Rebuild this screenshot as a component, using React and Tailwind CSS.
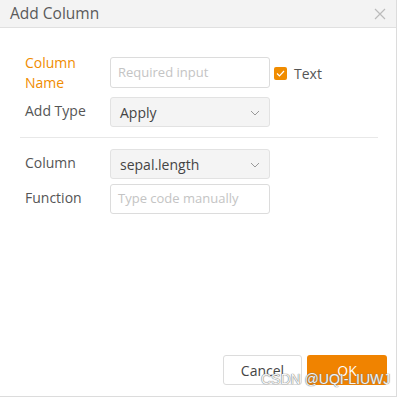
import React from "react";

function Chevron() {
  return (
    <svg width="10" height="6" viewBox="0 0 10 6" className="absolute right-[9px] top-[12px]">
      <path d="M1 1 L5 5 L9 1" fill="none" stroke="#999" strokeWidth="1" />
    </svg>
  );
}

export default function App() {
  return (
    <div className="relative w-[399px] h-[398px] bg-white overflow-hidden" style={{ fontFamily: '"Open Sans", "Noto Sans", sans-serif' }}>
      <div className="w-[397px] h-[397px] border-r border-b border-[#dcdcdc] flex flex-col">
        <div className="h-[28px] bg-[#f3f3f3] border-b border-[#e0e0e0] flex items-center justify-between pl-[10px] pr-[10px] shrink-0">
          <span className="text-[15.5px] text-[#5a5a5a] leading-none">Add Column</span>
          <svg width="12" height="12" viewBox="0 0 12 12">
            <path d="M1 1 L11 11 M11 1 L1 11" stroke="#bbb" strokeWidth="1.2" />
          </svg>
        </div>
        <div className="flex-1 flex flex-col pt-[29px] px-[20px]">
          <div className="flex items-start h-[31px]">
            <div className="w-[90px] pl-[5px] text-[14px] leading-[20px] text-[#f08c00] -mt-[4px]">
              Column<br />Name
            </div>
            <div className="w-[160px] h-[31px] border border-[#dcdcdc] rounded-[3px] flex items-center px-[7px] text-[13px] text-[#c4c4c4]">
              Required input
            </div>
            <div className="flex items-center ml-[4px] mt-[6px]">
              <div className="w-[13px] h-[13px] bg-[#f08c00] rounded-[2px] flex items-center justify-center">
                <svg width="9" height="7" viewBox="0 0 9 7">
                  <path d="M1 3.5 L3.5 6 L8 1" fill="none" stroke="#fff" strokeWidth="1.2" />
                </svg>
              </div>
              <span className="ml-[7px] text-[14px] text-[#555]">Text</span>
            </div>
          </div>
          <div className="flex items-center mt-[9px]">
            <div className="w-[90px] pl-[5px] text-[14px] text-[#555] -mt-[4px]">Add Type</div>
            <div className="relative w-[160px] h-[30px] bg-[#f4f4f4] border border-[#e2e2e2] rounded-[3px] flex items-center px-[9px] text-[14px] text-[#444]">
              Apply
              <Chevron />
            </div>
          </div>
          <div className="h-px bg-[#e8e8e8] mt-[10px] mr-[-2px]"></div>
          <div className="flex items-center mt-[11px]">
            <div className="w-[90px] pl-[5px] text-[14px] text-[#555] -mt-[4px]">Column</div>
            <div className="relative w-[160px] h-[30px] bg-[#f4f4f4] border border-[#e2e2e2] rounded-[3px] flex items-center px-[9px] text-[14px] text-[#444]">
              sepal.length
              <Chevron />
            </div>
          </div>
          <div className="flex items-center mt-[5px]">
            <div className="w-[90px] pl-[5px] text-[14px] text-[#555] -mt-[4px]">Function</div>
            <div className="w-[160px] h-[30px] border border-[#dcdcdc] rounded-[3px] flex items-center px-[7px] text-[13px] text-[#c4c4c4]">
              Type code manually
            </div>
          </div>
          <div className="flex-1"></div>
          <div className="flex justify-end gap-[5px] pb-[11px] mr-[-11px]">
            <div className="w-[79px] h-[30px] border border-[#dcdcdc] rounded-[3px] flex items-center justify-center text-[14px] text-[#444]">
              Cancel
            </div>
            <div className="w-[80px] h-[30px] bg-[#f08300] rounded-[3px] flex items-center justify-center text-[14px] text-white">
              OK
            </div>
          </div>
        </div>
      </div>
      <div
        className="absolute left-[261px] top-[372px] text-[14px] text-[#f4f4f4] leading-none whitespace-nowrap"
        style={{
          fontFamily: '"Liberation Sans", sans-serif',
          textShadow: "0 0 1px #777, 0 0 1px #777",
        }}
      >
        CSDN @UQI-LIUWJ
      </div>
    </div>
  );
}
